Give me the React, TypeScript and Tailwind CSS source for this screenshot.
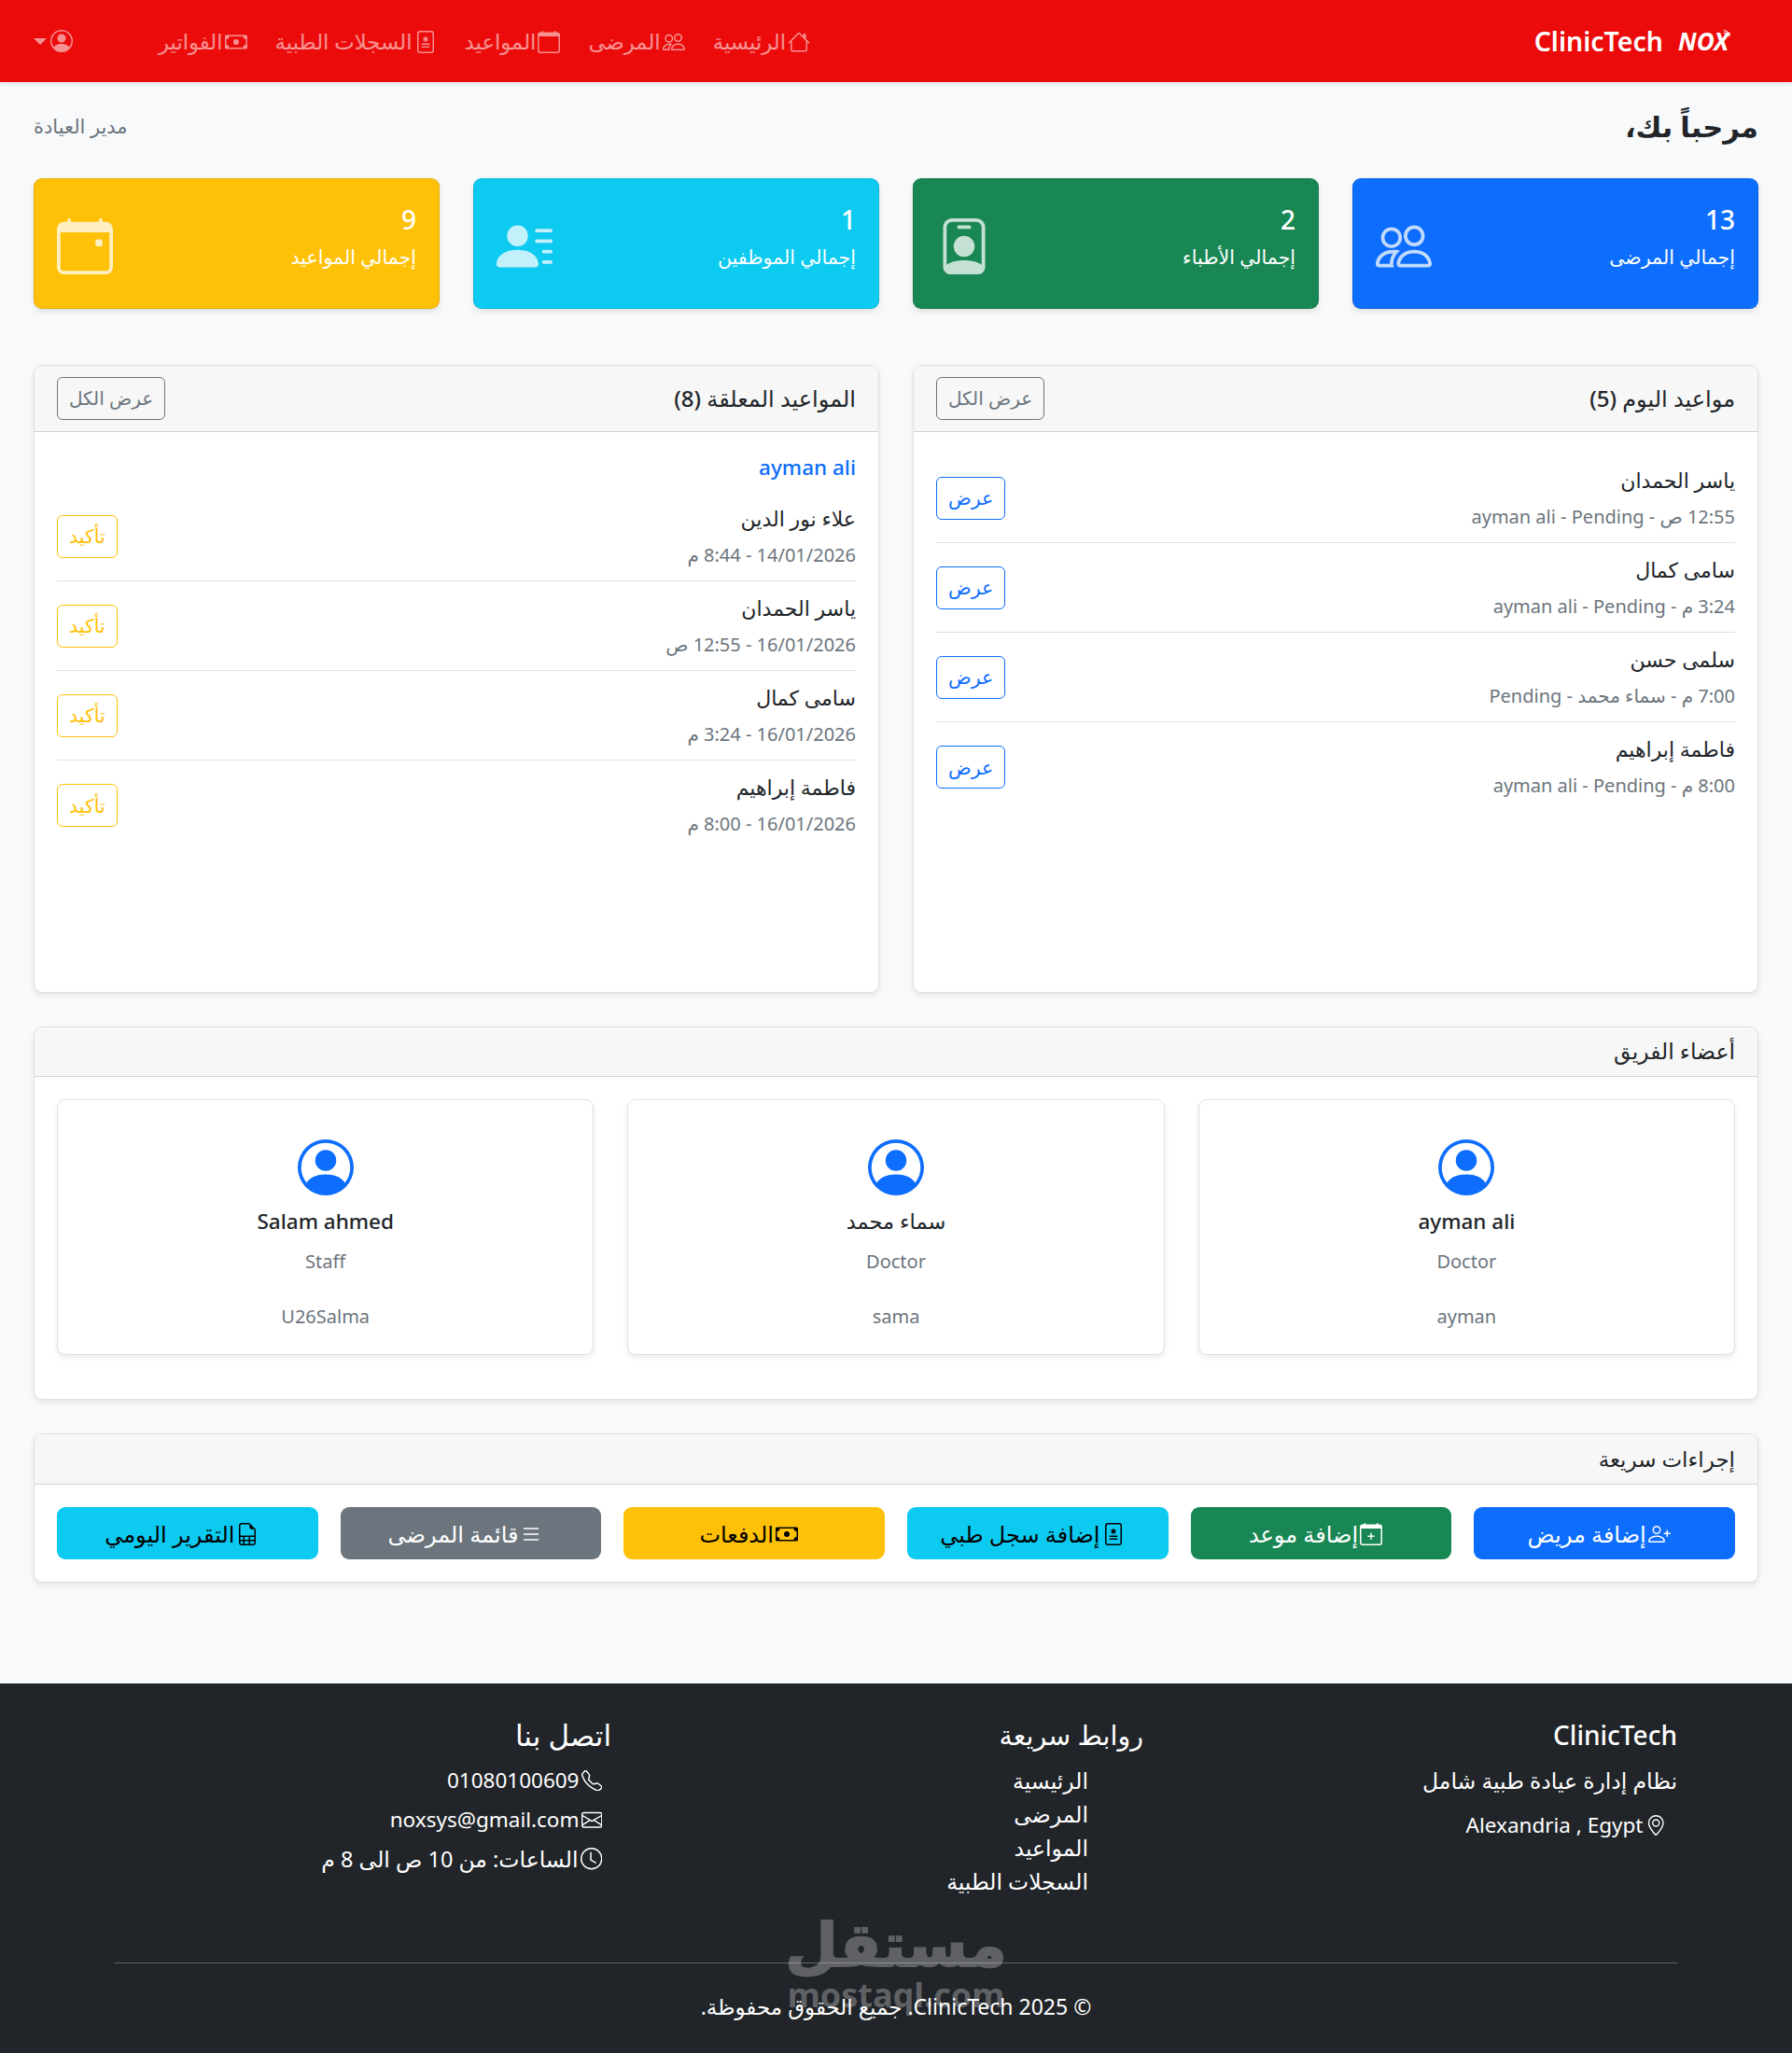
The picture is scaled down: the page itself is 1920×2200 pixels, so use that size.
import type { ReactNode } from 'react'
import {
  BsCalendar,
  BsCalendarEvent,
  BsCalendarPlus,
  BsCash,
  BsClock,
  BsEnvelope,
  BsFileEarmarkSpreadsheet,
  BsFileMedical,
  BsGeoAlt,
  BsHouse,
  BsList,
  BsPeople,
  BsPersonBadge,
  BsPersonCircle,
  BsPersonLinesFill,
  BsPersonPlus,
  BsTelephone,
} from 'react-icons/bs'

const navLinks = [
  { label: 'الرئيسية', icon: <BsHouse /> },
  { label: 'المرضى', icon: <BsPeople /> },
  { label: 'المواعيد', icon: <BsCalendar /> },
  { label: 'السجلات الطبية', icon: <BsFileMedical /> },
  { label: 'الفواتير', icon: <BsCash /> },
]

const stats = [
  { value: '13', label: 'إجمالي المرضى', bg: 'bg-[#0d6efd]', icon: <BsPeople /> },
  { value: '2', label: 'إجمالي الأطباء', bg: 'bg-[#198754]', icon: <BsPersonBadge /> },
  { value: '1', label: 'إجمالي الموظفين', bg: 'bg-[#0dcaf0]', icon: <BsPersonLinesFill /> },
  { value: '9', label: 'إجمالي المواعيد', bg: 'bg-[#ffc107]', icon: <BsCalendarEvent /> },
]

const todayRows = [
  { name: 'ياسر الحمدان', info: ['12:55 ص', 'Pending', 'ayman ali'] },
  { name: 'سامى كمال', info: ['3:24 م', 'Pending', 'ayman ali'] },
  { name: 'سلمى حسن', info: ['7:00 م', 'سماء محمد', 'Pending'] },
  { name: 'فاطمة إبراهيم', info: ['8:00 م', 'Pending', 'ayman ali'] },
]

const pendingRows = [
  { name: 'علاء نور الدين', info: ['14/01/2026', '8:44 م'] },
  { name: 'ياسر الحمدان', info: ['16/01/2026', '12:55 ص'] },
  { name: 'سامى كمال', info: ['16/01/2026', '3:24 م'] },
  { name: 'فاطمة إبراهيم', info: ['16/01/2026', '8:00 م'] },
]

const team = [
  { name: 'ayman ali', role: 'Doctor', user: 'ayman' },
  { name: 'سماء محمد', role: 'Doctor', user: 'sama' },
  { name: 'Salam ahmed', role: 'Staff', user: 'U26Salma' },
]

const actions = [
  { label: 'إضافة مريض', icon: <BsPersonPlus />, cls: 'bg-[#0d6efd] text-white' },
  { label: 'إضافة موعد', icon: <BsCalendarPlus />, cls: 'bg-[#198754] text-white' },
  { label: 'إضافة سجل طبي', icon: <BsFileMedical />, cls: 'bg-[#0dcaf0] text-black' },
  { label: 'الدفعات', icon: <BsCash />, cls: 'bg-[#ffc107] text-black' },
  { label: 'قائمة المرضى', icon: <BsList />, cls: 'bg-[#6c757d] text-white' },
  { label: 'التقرير اليومي', icon: <BsFileEarmarkSpreadsheet />, cls: 'bg-[#0dcaf0] text-black' },
]

function Card({ children, className = '' }: { children: ReactNode; className?: string }) {
  return (
    <div className={`rounded-[9px] border border-black/12 bg-white shadow-[0_3px_6px_rgba(0,0,0,0.08)] overflow-hidden ${className}`}>
      {children}
    </div>
  )
}

function ListHeader({ title }: { title: string }) {
  return (
    <div className="flex h-[71px] items-center justify-between border-b border-black/15 bg-[#f7f7f7] px-6">
      <h5 className="text-[24px] font-medium text-[#212529]">{title}</h5>
      <button className="flex h-[46px] w-[116px] items-center justify-center rounded-[6px] border border-[#6c757d] text-[20px] text-[#6c757d]">
        عرض الكل
      </button>
    </div>
  )
}

function Row({ name, info, button, tone }: { name: string; info: string[]; button: string; tone: string }) {
  return (
    <div className="flex h-[96px] items-center justify-between border-b border-[#dee2e6] last:border-b-0">
      <div>
        <h6 className="text-[22px] leading-[36px] font-medium text-[#212529]">{name}</h6>
        <p className="mt-1 text-[20px] leading-[36px] text-[#6c757d]">
          {info.map((part, i) => (
            <span key={part}>
              {i > 0 && ' - '}
              <bdi>{part}</bdi>
            </span>
          ))}
        </p>
      </div>
      <button className={`flex h-[46px] items-center justify-center rounded-[6px] border px-3 text-[20.5px] ${tone}`}>
        {button}
      </button>
    </div>
  )
}

export default function App() {
  return (
    <div dir="rtl" className="flex min-h-[2200px] flex-col bg-[#f8f9fa] text-[21px] text-[#212529] [font-family:'Noto_Sans','DejaVu_Sans',sans-serif]">
      <nav className="flex h-[88px] items-center bg-[#ec0b0b] pr-[68px] pl-9 shadow-[0_2px_4px_rgba(0,0,0,0.08)]">
        <div className="flex items-center gap-4 text-white" dir="ltr">
          <span className="text-[28.5px] font-semibold">ClinicTech</span>
          <span className="relative text-[26px] font-bold italic">
            NOX
            <svg viewBox="0 0 10 10" className="absolute top-[7px] -right-[2px] h-2 w-2" fill="none" stroke="white" strokeWidth="1.4">
              <path d="M1 4a5 5 0 0 1 5 5M1 1a8 8 0 0 1 8 8" />
            </svg>
          </span>
        </div>
        <div className="mr-auto flex items-center gap-[30px] pt-0.5 text-[22.75px] text-white/55">
          {navLinks.map(link => (
            <a key={link.label} className="flex items-center gap-0.5">
              <span className="text-[24px]">{link.icon}</span>
              {link.label}
            </a>
          ))}
        </div>
        <div className="mr-[92px] flex items-center gap-1 text-white/55">
          <BsPersonCircle className="text-[24px]" />
          <span className="h-0 w-0 border-x-[7px] border-t-[7px] border-x-transparent border-t-white/55" />
        </div>
      </nav>

      <main className="flex flex-col px-9">
        <div className="flex h-[103px] items-center justify-between pb-2">
          <h2 className="text-[30.5px] font-semibold text-[#212529]">مرحباً بك،</h2>
          <span className="text-[21px] text-[#6c757d]">مدير العيادة</span>
        </div>

        <div className="grid grid-cols-4 gap-9">
          {stats.map(s => (
            <div key={s.label} className={`flex h-[140px] items-center justify-between rounded-[9px] border border-black/10 px-6 text-white shadow-[0_3px_6px_rgba(0,0,0,0.1)] ${s.bg}`}>
              <div className="pb-4">
                <div className="text-[28px] leading-[44px] font-medium">{s.value}</div>
                <div className="text-[20.5px] leading-[36px]">{s.label}</div>
              </div>
              <span className="mt-[5px] text-[60px] opacity-75">{s.icon}</span>
            </div>
          ))}
        </div>

        <div className="mt-[60px] grid grid-cols-2 gap-9">
          <Card className="h-[673px]">
            <ListHeader title="مواعيد اليوم (5)" />
            <div className="px-6 pt-[23px]">
              {todayRows.map(r => (
                <Row key={r.name} name={r.name} info={r.info} button="عرض" tone="border-[#0d6efd] text-[#0d6efd]" />
              ))}
            </div>
          </Card>
          <Card className="h-[673px]">
            <ListHeader title="المواعيد المعلقة (8)" />
            <div className="px-6 pt-[23px]">
              <h6 className="-mt-[3px] mb-2 text-[22.5px] leading-[36px] font-medium text-[#0d6efd]">ayman ali</h6>
              {pendingRows.map(r => (
                <Row key={r.name} name={r.name} info={r.info} button="تأكيد" tone="border-[#ffc107] text-[#ffc107]" />
              ))}
            </div>
          </Card>
        </div>

        <Card className="mt-9 h-[400px]">
          <div className="flex h-[53px] items-center border-b border-black/15 bg-[#f7f7f7] px-6 text-[23.5px] font-medium">أعضاء الفريق</div>
          <div className="grid grid-cols-3 gap-9 p-6">
            {team.map(m => (
              <div key={m.user} className="flex h-[274px] flex-col items-center rounded-[9px] border border-black/12 pt-[42px] shadow-[0_3px_6px_rgba(0,0,0,0.08)]">
                <BsPersonCircle className="text-[60px] text-[#0d6efd]" />
                <div className="mt-2.5 text-[22.5px] leading-[36px] font-medium">{m.name}</div>
                <div className="mt-[7px] text-[20px] leading-[36px] text-[#6c757d]">{m.role}</div>
                <div className="mt-[23px] text-[20px] leading-[36px] text-[#6c757d]">{m.user}</div>
              </div>
            ))}
          </div>
        </Card>

        <Card className="mt-9 h-[160px]">
          <div className="flex h-[54px] items-center border-b border-black/15 bg-[#f7f7f7] px-6 text-[23px] font-medium">إجراءات سريعة</div>
          <div className="grid grid-cols-6 gap-6 p-6">
            {actions.map(a => (
              <button key={a.label} className={`flex h-[56px] items-center justify-center gap-0.5 rounded-[9px] pt-0.5 pr-3 text-[24px] ${a.cls}`}>
                <span className="text-[24px]">{a.icon}</span>
                {a.label}
              </button>
            ))}
          </div>
        </Card>
      </main>

      <footer className="relative mt-auto h-[396px] bg-[#212529] px-[123px] pt-[31px] text-white">
        <div className="grid grid-cols-[572px_570px_1fr]">
          <div>
            <h5 className="text-[28px] leading-[48px] font-medium">ClinicTech</h5>
            <p className="mt-[7px] text-[23.5px] leading-[36px]">نظام إدارة عيادة طبية شامل</p>
            <p className="mt-3 flex items-center gap-0.5 pr-3 text-[22.5px] leading-[36px]"><BsGeoAlt />Alexandria , Egypt</p>
          </div>
          <div>
            <h5 className="text-[28.5px] leading-[48px] font-medium">روابط سريعة</h5>
            <ul className="mt-[7px] pr-[59px] text-[23.5px] leading-[36px]">
              <li>الرئيسية</li>
              <li>المرضى</li>
              <li>المواعيد</li>
              <li>السجلات الطبية</li>
            </ul>
          </div>
          <div>
            <h5 className="text-[31px] leading-[48px] font-medium">اتصل بنا</h5>
            <ul className="mt-[7px] space-y-1.5 pr-2.5 leading-[36px]">
              <li className="flex items-center gap-0.5 text-[22.5px]"><BsTelephone />01080100609</li>
              <li className="flex items-center gap-0.5 text-[22.5px]"><BsEnvelope />noxsys@gmail.com</li>
              <li className="flex items-center gap-0.5 text-[23.5px]"><BsClock />الساعات: من 10 ص الى 8 م</li>
            </ul>
          </div>
        </div>
        <div className="pointer-events-none absolute top-[238px] left-1/2 flex -translate-x-1/2 flex-col items-center text-[#5f6165]">
          <span className="text-[65px] leading-[80px] font-bold [-webkit-text-stroke:2px_#5f6165]">مستقل</span>
          <span className="-mt-0.5 text-[36px] leading-[36px] font-bold" dir="ltr">mostaql.com</span>
        </div>
        <div className="absolute inset-x-[123px] top-[299px] border-t border-white/30 pt-[29px] text-center text-[23px]">
          © 2025 ClinicTech. جميع الحقوق محفوظة.
        </div>
      </footer>
    </div>
  )
}
